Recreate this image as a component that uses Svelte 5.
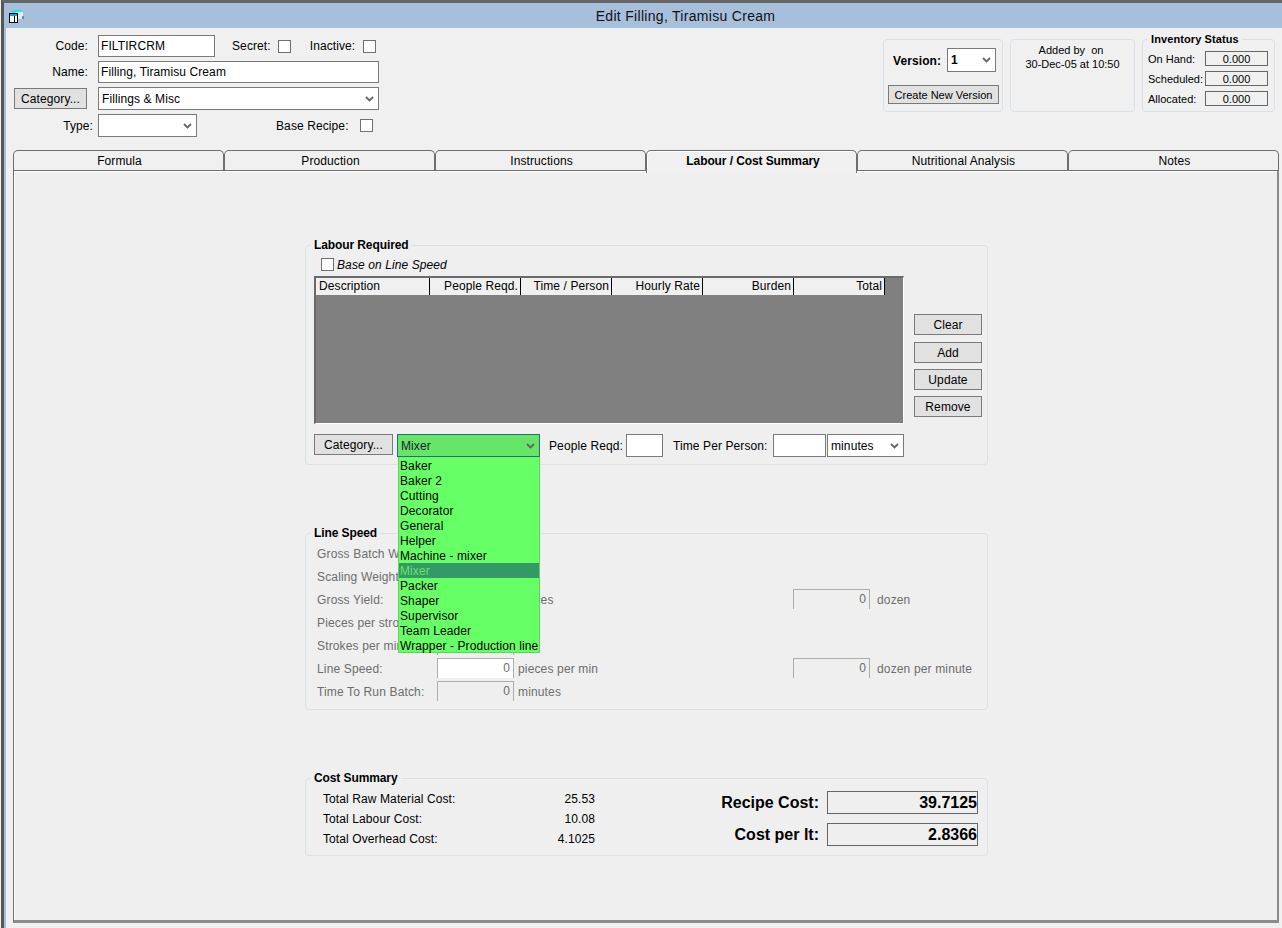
<script>
	const tabs = ['Formula', 'Production', 'Instructions', 'Labour / Cost Summary', 'Nutritional Analysis', 'Notes'];
	const activeTab = 'Labour / Cost Summary';

	const inventory = [
		{ label: 'On Hand:', value: '0.000' },
		{ label: 'Scheduled:', value: '0.000' },
		{ label: 'Allocated:', value: '0.000' }
	];

	const columns = [
		{ name: 'Description', left: true },
		{ name: 'People Reqd.' },
		{ name: 'Time / Person' },
		{ name: 'Hourly Rate' },
		{ name: 'Burden' },
		{ name: 'Total' }
	];

	const categories = ['Baker', 'Baker 2', 'Cutting', 'Decorator', 'General', 'Helper', 'Machine - mixer', 'Mixer', 'Packer', 'Shaper', 'Supervisor', 'Team Leader', 'Wrapper - Production line'];
	const selected = 'Mixer';

	const speedRows = [
		{ label: 'Gross Batch Weight:', value: '0' },
		{ label: 'Scaling Weight:', value: '0' },
		{ label: 'Gross Yield:', value: '0', unit: 'pieces', right: '0', rightUnit: 'dozen' },
		{ label: 'Pieces per stroke:', value: '0' },
		{ label: 'Strokes per minute:', value: '0' },
		{ label: 'Line Speed:', value: '0', unit: 'pieces per min', right: '0', rightUnit: 'dozen per minute', white: true },
		{ label: 'Time To Run Batch:', value: '0', unit: 'minutes' }
	];

	const costs = [
		{ label: 'Total Raw Material Cost:', value: '25.53' },
		{ label: 'Total Labour Cost:', value: '10.08' },
		{ label: 'Total Overhead Cost:', value: '4.1025' }
	];
</script>

{#snippet chevron()}
	<svg class="chevron" width="9" height="6" viewBox="0 0 9 6">
		<path d="M1 1 L4.5 4.5 L8 1" fill="none" stroke="currentColor" stroke-width="1.8" />
	</svg>
{/snippet}

<div class="window">
	<div class="titlebar">
		<svg class="appicon" width="15" height="14" viewBox="0 0 15 14">
			<rect x="7" y="2" width="7" height="7" fill="#e4ebf2" />
			<rect x="13" y="6" width="2" height="3" fill="#7d8590" />
			<rect x="3" y="0" width="9" height="2" fill="#19e6f0" />
			<rect x="0.5" y="3.5" width="8" height="9" fill="#fff" stroke="#000" />
			<rect x="1" y="4" width="7" height="2" fill="#19a0c8" />
			<rect x="5" y="6" width="1" height="6" fill="#000" />
		</svg>
		<span>Edit Filling, Tiramisu Cream</span>
	</div>

	<div class="client">
		<div class="head">
			<div class="form">
				<label class="lbl" for="code">Code:</label>
				<div class="line">
					<input id="code" class="field code" value="FILTIRCRM" />
					<span class="secret">Secret:</span>
					<span class="check"></span>
					<span class="inactive">Inactive:</span>
					<span class="check"></span>
				</div>

				<label class="lbl" for="name">Name:</label>
				<input id="name" class="field" value="Filling, Tiramisu Cream" />

				<button class="btn catbtn">Category...</button>
				<div class="select">
					<span>Fillings &amp; Misc</span>
					{@render chevron()}
				</div>

				<span class="lbl typelbl">Type:</span>
				<div class="line">
					<div class="select type">{@render chevron()}</div>
					<span class="base">Base Recipe:</span>
					<span class="check"></span>
				</div>
			</div>

			<div class="panels">
				<div class="group version">
					<div class="vline">
						<b class="vtext">Version:</b>
						<div class="select vsel"><b>1</b>{@render chevron()}</div>
					</div>
					<button class="btn newver">Create New Version</button>
				</div>
				<div class="group added">
					<div class="addedby">Added by&nbsp; on</div>
					<div>30-Dec-05 at 10:50</div>
				</div>
				<div class="group inv">
					<span class="legend">Inventory Status</span>
					{#each inventory as row}
						<div class="invrow">
							<span>{row.label}</span>
							<span class="invval">{row.value}</span>
						</div>
					{/each}
				</div>
			</div>
		</div>

		<div class="tabs">
			{#each tabs as tab}
				<div class="tab" class:active={tab === activeTab}>{tab}</div>
			{/each}
		</div>

		<div class="tabpanel">
			<div class="group labour">
				<span class="legend">Labour Required</span>
				<div class="lab-main">
					<div class="baseline">
						<span class="check"></span>
						<i>Base on Line Speed</i>
					</div>
					<div class="grid">
						<div class="gridhead">
							{#each columns as col}
								<div class="col" class:left={col.left}>{col.name}</div>
							{/each}
						</div>
					</div>
					<div class="entry">
						<button class="btn entrycat">Category...</button>
						<div class="dropwrap">
							<div class="select green">
								<span>{selected}</span>
								{@render chevron()}
							</div>
							<div class="droplist">
								{#each categories as cat}
									<div class="opt" class:sel={cat === selected}>{cat}</div>
								{/each}
							</div>
						</div>
						<span class="peoplelbl">People Reqd:</span>
						<input class="field people" />
						<span class="timelbl">Time Per Person:</span>
						<input class="field timeval" />
						<div class="select minutes">
							<span>minutes</span>
							{@render chevron()}
						</div>
					</div>
				</div>
				<div class="lab-btns">
					<button class="btn clear">Clear</button>
					<button class="btn">Add</button>
					<button class="btn">Update</button>
					<button class="btn">Remove</button>
				</div>
			</div>

			<div class="group speed">
				<span class="legend">Line Speed</span>
				{#each speedRows as row}
					<div class="speedrow">
						<span>{row.label}</span>
						<span class="numbox" class:white={row.white}>{row.value}</span>
						<span class="unit">{row.unit ?? ''}</span>
						{#if row.right}
							<span class="numbox">{row.right}</span>
							<span class="unit runit">{row.rightUnit}</span>
						{/if}
					</div>
				{/each}
			</div>

			<div class="group cost">
				<span class="legend">Cost Summary</span>
				<div class="costleft">
					{#each costs as row}
						<div class="costrow">
							<span>{row.label}</span>
							<span>{row.value}</span>
						</div>
					{/each}
				</div>
				<div class="costright">
					<div class="total"><b>Recipe Cost:</b><span class="totalbox">39.7125</span></div>
					<div class="total"><b>Cost per lt:</b><span class="totalbox">2.8366</span></div>
				</div>
			</div>
		</div>
	</div>
</div>

<style>
	:global(body) {
		margin: 0;
		background: #f0f0f0;
		font-family: "Liberation Sans", Arial, sans-serif;
		font-size: 12px;
		letter-spacing: 0.1px;
		color: #000;
	}

	.window {
		width: 1281px;
		height: 928px;
		margin-left: 1px;
		box-sizing: border-box;
		border-left: 3px solid #565656;
		border-top: 3px solid #666;
		overflow: hidden;
	}

	.titlebar {
		height: 25px;
		background: #a6c0dc;
		display: flex;
		align-items: center;
		justify-content: center;
		position: relative;
		padding-left: 85px;
		font-size: 14px;
		letter-spacing: 0.3px;
		color: #111;
	}

	.appicon {
		position: absolute;
		left: 5px;
		top: 7px;
	}

	.client {
		border-left: 2px solid #a6c0dc;
		height: 900px;
		background: #f0f0f0;
	}

	.head {
		height: 122px;
		display: flex;
		box-sizing: border-box;
		padding-top: 7px;
	}

	.form {
		margin-left: 8px;
		width: 365px;
		display: grid;
		grid-template-columns: 84px 281px;
		grid-template-rows: 22px 22px 23px 23px;
		row-gap: 4px;
		align-items: center;
	}

	.lbl {
		text-align: right;
		padding-right: 10px;
	}

	.typelbl {
		padding-right: 5px;
	}

	.line {
		display: flex;
		align-items: center;
		height: 100%;
	}

	.field {
		box-sizing: border-box;
		height: 22px;
		width: 100%;
		margin: 0;
		padding: 0 2px;
		border: 1px solid #7a7a7a;
		border-radius: 0;
		background: #fff;
		font: inherit;
		letter-spacing: inherit;
		color: #000;
		outline: none;
	}

	.code {
		width: 117px;
		flex: none;
	}

	.secret {
		margin-left: 17px;
		margin-right: 7px;
	}

	.inactive {
		margin-left: 19px;
		margin-right: 8px;
	}

	.base {
		margin-left: 79px;
		margin-right: 11px;
	}

	.check {
		width: 13px;
		height: 13px;
		flex: none;
		background: #fff;
		border: 1px solid #707070;
		box-sizing: border-box;
	}

	.btn {
		box-sizing: border-box;
		height: 21px;
		width: 100%;
		margin: 0;
		padding: 0;
		border: 1px solid #7a7a7a;
		border-radius: 0;
		background: #e1e1e1;
		font: inherit;
		letter-spacing: inherit;
		color: #000;
	}

	.catbtn {
		width: 73px;
	}

	.select {
		box-sizing: border-box;
		height: 23px;
		display: flex;
		align-items: center;
		justify-content: space-between;
		padding: 0 4px 0 3px;
		background: #fff;
		border: 1px solid #7a7a7a;
		color: #000;
	}

	.chevron {
		color: #666;
		flex: none;
		margin-left: auto;
	}

	.type {
		width: 99px;
	}

	.panels {
		margin-left: 504px;
		margin-top: 4px;
		display: flex;
		gap: 7px;
		height: 73px;
	}

	.group {
		position: relative;
		box-sizing: border-box;
		border: 1px solid #d9e1e8;
		border-radius: 4px;
	}

	.legend {
		position: absolute;
		left: 5px;
		top: -8px;
		padding: 0 3px;
		background: #f0f0f0;
		font-weight: bold;
		line-height: 14px;
		letter-spacing: -0.1px;
		color: #000;
	}

	.version {
		width: 120px;
		padding: 8px 3px 0 4px;
	}

	.vline {
		display: flex;
		align-items: center;
		justify-content: space-between;
		padding: 0 3px 0 5px;
	}

	.vtext {
		padding-top: 2px;
	}

	.vsel {
		width: 49px;
		height: 24px;
	}

	.newver {
		margin-top: 13px;
		height: 19px;
		font-size: 11px;
		letter-spacing: 0;
	}

	.added {
		width: 125px;
		padding-top: 3px;
		text-align: center;
		font-size: 11px;
		line-height: 14px;
		letter-spacing: 0;
	}

	.addedby {
		padding-right: 3px;
	}

	.inv {
		width: 133px;
		padding: 11px 6px 0 5px;
		font-size: 11px;
		letter-spacing: 0;
	}

	.inv .legend {
		font-size: 11px;
		letter-spacing: 0.1px;
	}

	.invrow {
		display: flex;
		justify-content: space-between;
		align-items: center;
		height: 15px;
		margin-bottom: 5px;
	}

	.invval {
		box-sizing: border-box;
		width: 63px;
		height: 15px;
		line-height: 15px;
		border: 1px solid #666;
		text-align: center;
	}

	.tabs {
		display: flex;
		margin-left: 7px;
		height: 20px;
		position: relative;
		z-index: 1;
	}

	.tab {
		box-sizing: border-box;
		width: 211px;
		height: 20px;
		padding-left: 2px;
		border: 1px solid #6e6e6e;
		border-bottom: none;
		border-radius: 5px 5px 0 0;
		text-align: center;
		line-height: 20px;
		background: #f0f0f0;
	}

	.tab.active {
		height: 23px;
		font-weight: bold;
		letter-spacing: -0.1px;
		padding-left: 3px;
		box-shadow: inset 1px 1px 0 #fff;
	}

	.tabpanel {
		box-sizing: border-box;
		margin-left: 7px;
		width: 1266px;
		height: 753px;
		padding: 74px 0 0 291px;
		background: #efefef;
		border: 1px solid #6e6e6e;
		border-right: 2px solid #8c8c8c;
		border-bottom: 3px solid #8c8c8c;
		box-shadow: inset 1px 1px 0 #fff;
	}

	.labour {
		width: 683px;
		height: 220px;
		display: flex;
		padding: 12px 5px 0 8px;
		gap: 10px;
	}

	.labour .legend,
	.speed .legend,
	.cost .legend {
		background: #efefef;
	}

	.lab-main {
		width: 590px;
		flex: none;
	}

	.baseline {
		display: flex;
		align-items: center;
		gap: 3px;
		height: 13px;
		padding-left: 7px;
	}

	.grid {
		box-sizing: border-box;
		height: 148px;
		margin-top: 5px;
		background: #808080;
		border-style: solid;
		border-width: 2px 1px 1px 2px;
		border-color: #6a6a6a #fff #fff #6a6a6a;
	}

	.gridhead {
		display: flex;
		height: 17px;
		background: #f0f0f0;
		width: 569px;
	}

	.col {
		box-sizing: border-box;
		width: 91px;
		padding: 0 2px;
		line-height: 17px;
		border-right: 1px solid #000;
		text-align: right;
	}

	.col.left {
		width: 114px;
		padding-left: 3px;
		text-align: left;
	}

	.entry {
		display: flex;
		align-items: center;
		height: 23px;
		margin-top: 10px;
	}

	.entrycat {
		width: 79px;
		flex: none;
		align-self: flex-start;
	}

	.dropwrap {
		position: relative;
		width: 143px;
		margin-left: 4px;
		flex: none;
	}

	.green {
		background: #66e566;
		border-color: #2a6a80;
		color: #1a1a40;
	}

	.droplist {
		position: absolute;
		left: 1px;
		top: 23px;
		width: 142px;
		height: 196px;
		box-sizing: border-box;
		padding-top: 1px;
		background: #66ff66;
		border: 1px solid #5bd65b;
		border-top: none;
		z-index: 2;
	}

	.opt {
		height: 15px;
		line-height: 17px;
		padding-left: 1px;
		white-space: nowrap;
		overflow: hidden;
	}

	.opt.sel {
		background: #339966;
		color: #66e566;
	}

	.peoplelbl {
		flex: none;
		white-space: nowrap;
		width: 74px;
		margin-left: 9px;
		margin-right: 3px;
	}

	.people {
		width: 37px;
		height: 23px;
		flex: none;
	}

	.timelbl {
		flex: none;
		white-space: nowrap;
		width: 94px;
		margin-left: 10px;
		margin-right: 6px;
	}

	.timeval {
		width: 53px;
		height: 23px;
		flex: none;
	}

	.minutes {
		width: 77px;
		margin-left: 1px;
		flex: none;
	}

	.lab-btns {
		width: 68px;
		display: flex;
		flex-direction: column;
		gap: 6px;
		margin-top: 56px;
	}

	.clear {
		margin-bottom: 1px;
	}

	.speed {
		width: 683px;
		height: 177px;
		margin-top: 68px;
		padding: 8px 0 0 11px;
		color: #6d6d6d;
		letter-spacing: 0.15px;
	}

	.speedrow {
		display: grid;
		grid-template-columns: 120px 77px 279px 77px auto;
		height: 23px;
		align-items: center;
	}

	.numbox {
		box-sizing: border-box;
		height: 20px;
		line-height: 19px;
		text-align: right;
		padding-right: 3px;
		border: 1px solid #adadad;
		border-bottom: none;
		margin-top: -1px;
	}

	.numbox.white {
		background: #fff;
	}

	.unit {
		padding-left: 4px;
	}

	.runit {
		padding-left: 7px;
	}

	.cost {
		width: 683px;
		height: 78px;
		margin-top: 68px;
		display: flex;
		justify-content: space-between;
		padding: 10px 9px 0 17px;
	}

	.costleft {
		width: 272px;
	}

	.costrow {
		display: flex;
		justify-content: space-between;
		height: 20px;
		line-height: 20px;
	}

	.costright {
		display: flex;
		flex-direction: column;
		gap: 9px;
		padding-top: 2px;
		font-size: 16px;
		letter-spacing: 0;
	}

	.total {
		display: flex;
		justify-content: flex-end;
		align-items: center;
		gap: 8px;
	}

	.totalbox {
		box-sizing: border-box;
		width: 151px;
		height: 23px;
		line-height: 21px;
		border: 1px solid #666;
		text-align: right;
		padding-right: 0;
		font-weight: bold;
	}
</style>
